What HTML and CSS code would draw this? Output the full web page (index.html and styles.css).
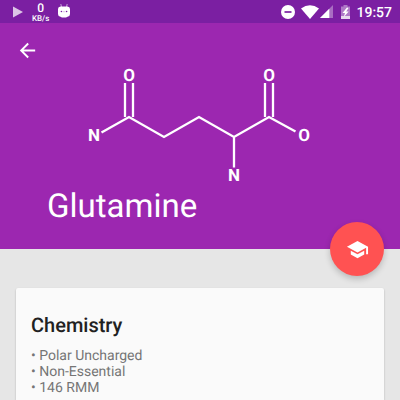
FILE: index.html
```html
<!DOCTYPE html>
<html lang="en">
<head>
<meta charset="utf-8">
<meta name="viewport" content="width=device-width, initial-scale=1">
<title>Glutamine</title>
<link rel="stylesheet" href="styles.css">
</head>
<body>
<div class="status-bar">
  <div class="status-group">
    <svg class="play" width="10" height="12" viewBox="0 0 10 12" aria-hidden="true"><path d="M0 0.5L10 6L0 11.5z"/></svg>
    <div class="speed"><span class="speed-value">0</span><span class="speed-unit">KB/s</span></div>
    <svg class="robot" width="12" height="16" viewBox="0 0 12 16" aria-hidden="true">
      <path d="M2.800 1L3.500 4M9.200 1L8.500 4" stroke="#cfb0dc" stroke-width=".9"/>
      <path d="M2.500 3.500h7Q12 3.700 12 6v5q0 2.500-2.500 2.800L8 14.500H4L2.500 13.800Q0 13.500 0 11V6Q0 3.700 2.500 3.500z" fill="#fff"/>
      <circle cx="3.400" cy="8.500" r=".8" fill="#7b1fa2"/><circle cx="8.600" cy="8.500" r=".8" fill="#7b1fa2"/>
      <path d="M4.700 8.700h2.600" stroke="#cfb0dc" stroke-width=".7"/>
    </svg>
  </div>
  <div class="status-group">
    <svg width="14" height="14" viewBox="0 0 14 14" aria-hidden="true"><circle cx="7" cy="7" r="7" fill="#fff"/><path d="M3.500 7h7" stroke="#7b1fa2" stroke-width="1.700"/></svg>
    <svg class="wifi" width="18" height="14" viewBox="0 0 18 14" aria-hidden="true"><path d="M0 3.500Q9-3.200 18 3.500L9 14z" fill="#fff"/></svg>
    <svg class="signal" width="13" height="13" viewBox="0 0 14 14" aria-hidden="true"><path d="M0 14L14 0V14z" fill="#fff" opacity=".35"/><path d="M0 14L10 4V14z" fill="#fff"/></svg>
    <svg class="battery" width="9" height="14" viewBox="0 0 9 14" aria-hidden="true"><path d="M2.500 0h4v1.500H9V14H0V1.500h2.500z" fill="#fff" opacity=".4"/><path d="M0 11h9v3H0z" fill="#fff" opacity=".7"/><path d="M6 2.500L1.500 8H4L2.800 12L7.700 6.500H5.200L7.500 3z" fill="#fff"/></svg>
    <time class="clock">19:57</time>
  </div>
</div>
<header class="hero">
  <button class="back" type="button" aria-label="Back">
    <svg width="23" height="23" viewBox="0 0 24 24" aria-hidden="true"><path fill="#fff" d="M20 11H7.830l5.590-5.590L12 4l-8 8 8 8 1.410-1.410L7.830 13H20v-2z"/></svg>
  </button>
  <svg class="molecule" width="224" height="124" viewBox="88 64 224 124" role="img" aria-label="Glutamine structure">
    <path class="bonds" d="M101.500 132.500L129 117L164 137L199 117L234 137L269 117L295.500 131.500M234 137V167.500M125 83V117M133 83V117M265 83V117M273 83V117"/>
    <g class="atoms">
      <text x="129" y="81">O</text>
      <text x="94" y="141">N</text>
      <text x="269" y="81">O</text>
      <text x="304" y="141">O</text>
      <text x="234" y="181">N</text>
    </g>
  </svg>
  <h1 class="title">Glutamine</h1>
  <button class="fab" type="button" aria-label="Learn">
    <svg width="23" height="23" viewBox="0 0 24 24" aria-hidden="true"><path fill="#fff" d="M5 13.180v4L12 21l7-3.820v-4L12 17l-7-3.820zM12 3L1 9l11 6 9-4.910V17h2V9L12 3z"/></svg>
  </button>
</header>
<main class="content">
  <section class="card">
    <h2 class="card-title">Chemistry</h2>
    <ul class="facts">
      <li>Polar Uncharged</li>
      <li>Non-Essential</li>
      <li>146 RMM</li>
    </ul>
  </section>
</main>
</body>
</html>
```
FILE: styles.css
```css
* {
  box-sizing: border-box;
}

html {
  background: #e6e6e6;
}

body {
  display: flex;
  flex-direction: column;
  margin: 0;
  min-height: 100vh;
  font-family: Roboto, "Liberation Sans", sans-serif;
  color: #212121;
  text-rendering: geometricPrecision;
}

svg {
  display: block;
}

button {
  padding: 0;
  border: 0;
  cursor: pointer;
}

.status-bar {
  display: flex;
  justify-content: space-between;
  height: 23px;
  padding: 0 8px 0 13px;
  background: #7b1fa2;
  color: #fff;
}

.status-group {
  display: flex;
  align-items: center;
}

.play {
  fill: #dcc4e6;
}

.speed {
  display: flex;
  flex-direction: column;
  align-items: center;
  margin: 0 9px;
  font-weight: 500;
}

.speed-value {
  font-size: 12px;
  line-height: 14px;
}

.speed-unit {
  font-size: 8px;
  line-height: 8px;
}

.robot {
  margin-bottom: 1px;
}

.wifi {
  margin-left: 6px;
}

.signal {
  margin-left: 1px;
}

.battery {
  margin: 0 6px 0 8px;
}

.clock {
  padding-top: 2px;
  font-size: 14px;
  line-height: 24px;
  font-weight: 500;
}

.hero {
  position: relative;
  padding: 16px 16px 23px;
  background: #9c27b0;
  color: #fff;
}

.back {
  display: block;
  background: none;
}

.molecule {
  margin: 2px auto 0;
}

.bonds {
  fill: none;
  stroke: #fff;
  stroke-width: 2.3;
}

.atoms {
  fill: #fff;
  font-size: 17px;
  font-weight: 700;
  text-anchor: middle;
}

.title {
  margin: 0 31px;
  font-size: 33px;
  line-height: 38px;
  font-weight: 400;
}

.fab {
  position: absolute;
  right: 16px;
  bottom: -27px;
  display: grid;
  place-items: center;
  width: 54px;
  height: 54px;
  border-radius: 50%;
  background: #ff5252;
  box-shadow: 0 3px 6px rgba(0, 0, 0, 0.2);
}

.content {
  display: flex;
  flex: 1;
  padding: 39px 16px 0;
}

.card {
  flex: 1;
  padding: 25px 15px 0;
  border-radius: 2px 2px 0 0;
  background: #fafafa;
  box-shadow: 0 1px 2px rgba(0, 0, 0, 0.25);
}

.card-title {
  margin: 0 0 11px;
  font-size: 20px;
  line-height: 24px;
  font-weight: 500;
}

.facts {
  margin: 0;
  padding: 0;
  list-style: none;
  font-size: 14px;
  line-height: 16px;
  color: #757575;
}

.facts li::before {
  content: "• ";
}
```
